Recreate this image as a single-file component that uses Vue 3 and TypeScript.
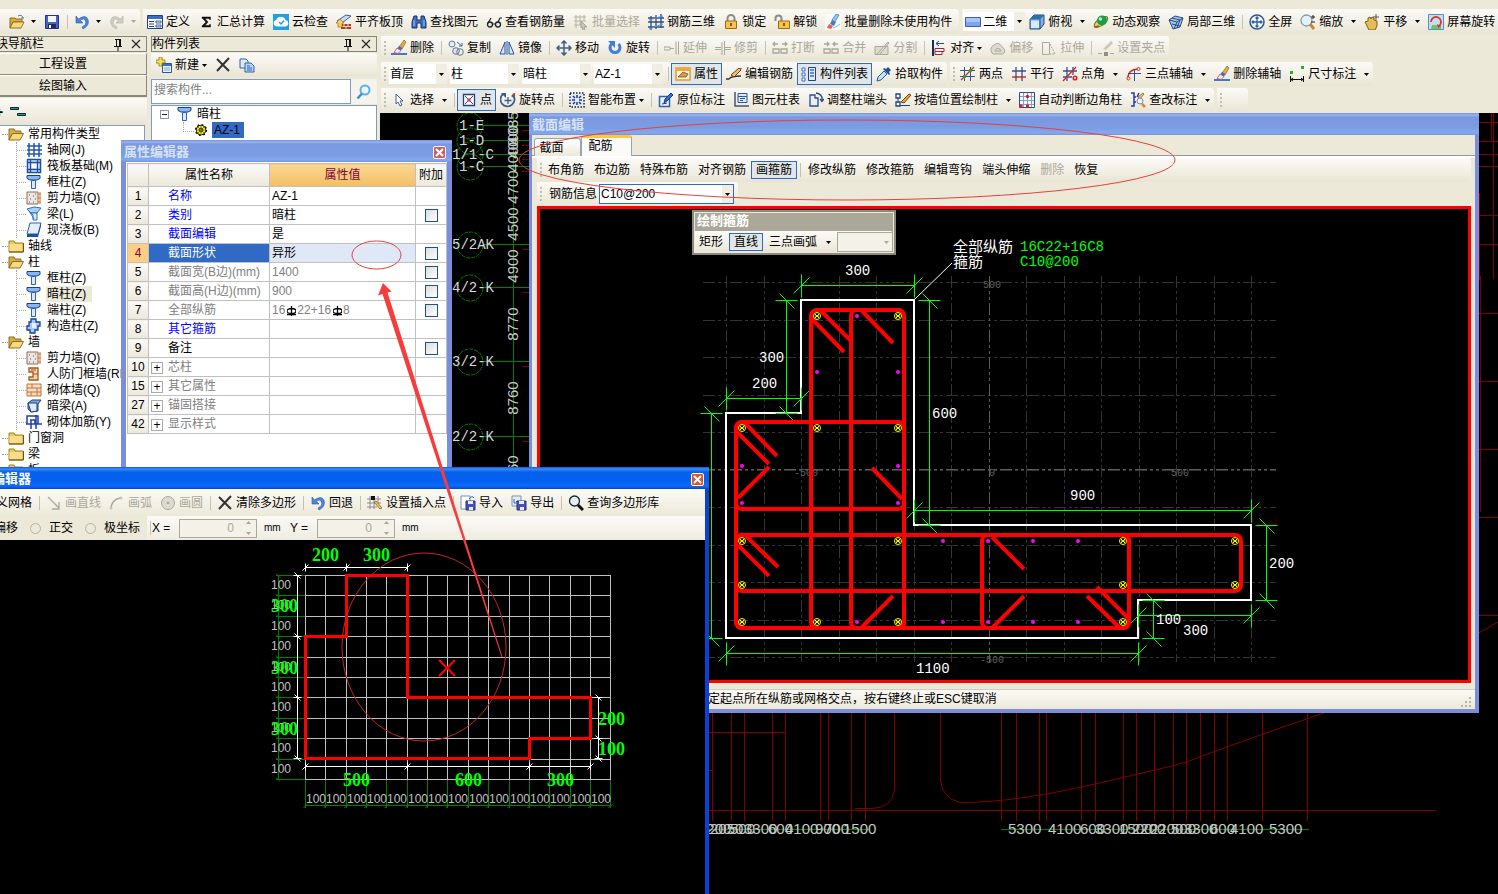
<script setup lang="ts">
import { ref } from 'vue'

interface Tool {
  icon?: string
  label?: string
  name?: string
  off?: boolean
  on?: boolean
  caret?: boolean
  tight?: boolean
  sep?: boolean
}

const icons: Record<string, string> = {
  open: '<path d="M1 4h5l1 1h6v3H4l-3 6z" fill="#e2a93c" stroke="#8d6d24"/><path d="M4 8h11l-3 6H1z" fill="#fbd982" stroke="#8d6d24"/><path d="M9 2q4-2 5 2m-2 0h3" fill="none" stroke="#3d7ea6"/>',
  save: '<path d="M1.500 1.500h13v13h-13z" fill="#4a63c8" stroke="#26357e"/><path d="M4 2h8v6H4z" fill="#f2f5ff"/><path d="M4 10h8v4H4z" fill="#1f2b62"/><path d="M5 11h2v3H5z" fill="#fff"/>',
  undo: '<path d="M2 2v7h7l-2.500-2.500Q10 3.500 11.500 7T8 13l1 2q7-4 5-9.500T4.500 5z" fill="#4a86e0" stroke="#2a55a8" stroke-width=".6"/>',
  redo: '<path d="M14 2v7H7l2.500-2.500Q6 3.500 4.500 7T8 13l-1 2Q0 11 2 5.500T11.500 5z" fill="#d0cfc6" stroke="#b0aea2" stroke-width=".6"/>',
  form: '<path d="M.5 1.500h15v13H.5z" fill="#fff" stroke="#24417f"/><path d="M1 2h14v3H1z" fill="#3b6bc4"/><path d="M2 7.500h5m-5 2.500h5m-5 2.500h5" stroke="#24417f"/><path d="M9 7h5v2H9zm0 4h5v2H9z" fill="#dfe9fa" stroke="#24417f" stroke-width=".8"/>',
  sigma: '<path d="M12.500 5.500V3H4v1l4 4-4 4v1h8.500v-2.500h-1l-.5 1H7L10 8 7 4.500h4l.5 1z" fill="#111" stroke="#111" stroke-width=".5"/>',
  cloud: '<path d="M0 0h16v16H0z" fill="#1f9fe6"/><path d="M4 12.500a3.300 3.300 0 0 1-.8-6.500A5 5 0 0 1 12.500 6a3.300 3.300 0 0 1 0 6.500z" fill="#fff"/><path d="m6 8 2 2 3-3.500" fill="none" stroke="#1f9fe6" stroke-width="1.500"/>',
  slab: '<path d="m1 7 9-6 5 1-9 7z" fill="#c9dcf4" stroke="#3c5d92"/><path d="M5 10h10v5H5z" fill="#b03a24"/><path d="M5 12.500h10M8 10v2.500M12 10v2.500M10 12.500V15" stroke="#f2d4c0"/><path d="m4 5 4 4H6v4H2V9H0z" fill="#fbd44c" stroke="#8d6d24" stroke-width=".7"/>',
  find: '<path d="M3 2h3v4h4V2h3l2 6v6h-5V9H6v5H1V8z" fill="#3a6fc2" stroke="#17356f"/><path d="M3 6v6m10-6v6" stroke="#a9c8f2"/>',
  glasses: '<circle cx="4" cy="10.500" r="2.500" fill="#dfe8f2" stroke="#222" stroke-width="1.300"/><circle cx="12" cy="10.500" r="2.500" fill="#dfe8f2" stroke="#222" stroke-width="1.300"/><path d="M6.500 10h3M2 9l3-5m7 4 2-4h2" fill="none" stroke="#222" stroke-width="1.200"/>',
  batch: '<path d="M1 3h12M1 7h12M1 11h7M3 1v13M7 1v10M11 1v6" stroke="#b5b3a6"/><path d="m8 7 6 6h-3l1 3h-2l-1-3-1 1z" fill="#c9c7bb" stroke="#a5a396"/>',
  cage: '<path d="M0 4h16M0 8h16M0 13h16M3 2v14M8 1v14M13 0v14" stroke="#2c4f86" stroke-width="1.300"/><path d="m1 6 14-4M1 15l14-5" stroke="#6a8dc0"/>',
  lock: '<path d="M4.500 7V4.500a3.500 3.500 0 0 1 7 0V7" fill="none" stroke="#8b8b8b" stroke-width="2"/><path d="M2.500 7h11v7.500h-11z" fill="#f6c250" stroke="#9a6c12"/><path d="M8 9v3" stroke="#5c3f08" stroke-width="1.500"/>',
  unlock: '<path d="M1.500 7V4.500a3 3 0 0 1 6 0V7" fill="none" stroke="#8b8b8b" stroke-width="2"/><path d="M4.500 7h11v7.500h-11z" fill="#f6c250" stroke="#9a6c12"/><path d="M10 9v3" stroke="#5c3f08" stroke-width="1.500"/>',
  brush: '<path d="M0 14h16" stroke="#4a79b8" stroke-width="2"/><path d="m13 0 2 2-4 7-3-2z" fill="#e9a63a" stroke="#8a5d18" stroke-width=".6"/><path d="m8 6 3.500 2-2 3L6 9z" fill="#3c6ec8"/><path d="m6 8 4 2.500-3 3-4-1z" fill="#f4e6ee" stroke="#a0507a" stroke-width=".8"/>',
  erase: '<path d="M0 0h16v16H0z" fill="#fbfbf9"/><path d="m11 0 3 1-4 7-3-2z" fill="#8fc4ee" stroke="#2f6ba8" stroke-width=".6"/><path d="m7 6 4 2-2 4-4-2z" fill="#3f7fd0"/><path d="m4 10 4 2-2 3-4-1z" fill="#e8604c"/><path d="M8 14q4-1 7-4" stroke="#9bb7d8" fill="none"/>',
  rect2d: '<path d="M.5 3.500h15v9H.5z" fill="#7ea6ef" stroke="#3a5fb0"/><path d="M1 4h14v4H1z" fill="#a9c6fa"/>',
  cube: '<path d="M1 5.500 5 1h10v9l-4 5H1z" fill="#7fb2e4" stroke="#22496f"/><path d="M1 5.500h10L15 1H5z" fill="#2b6dae"/><path d="M2 6.500h8V14H2z" fill="#d6e8f8"/><path d="M11 5.500V15" stroke="#22496f"/>',
  orbit: '<ellipse cx="8" cy="8" rx="8" ry="3.500" transform="rotate(-35 8 8)" fill="#d8d26a" stroke="#4c7f2a"/><circle cx="9" cy="6.500" r="5" fill="#1f9b44"/><circle cx="7.500" cy="5" r="1.800" fill="#b9f0c4"/><path d="m1 13 5-1" stroke="#d0452e" stroke-width="1.500"/>',
  box3: '<path d="m1 6 6-4 8 2-3 9-7 2z" fill="#a9c6ee" stroke="#26497f"/><path d="m1 6 8 2 6-4M9 8l-3 7M4 4l8 2-3 8M4 10l8 2" fill="none" stroke="#26497f"/>',
  fit: '<circle cx="8" cy="8" r="7" fill="#f4f8ff" stroke="#37557f" stroke-width="1.500"/><path d="M8 3v10M3 8h10M6.500 4.500 8 3l1.500 1.500M6.500 11.500 8 13l1.500-1.500M4.500 6.500 3 8l1.500 1.500m7-3L13 8l-1.500 1.500" fill="none" stroke="#2b5fb0" stroke-width="1.300"/>',
  zoom: '<circle cx="6.500" cy="6.500" r="5.500" fill="#e5f1fc" stroke="#8599ad" stroke-width="1.300"/><path d="m10 10 4 5" stroke="#c08a3c" stroke-width="3"/><path d="M11 3h4m-2-2v4m-2 3h4" stroke="#222"/>',
  pan: '<path d="M1 8 4 7V4l2-1 1 2 1-2 2 1v2l3 1v5l-2 4H5z" fill="#e8bc58" stroke="#7e5d1c"/><path d="M12 0v6M9 3h6" stroke="#555"/>',
  spin: '<path d="M0 0h16v16H0z" fill="#bfe0f4"/><path d="M4 11h9v4H3z" fill="#7fbd62"/><path d="M3 8a5 5 0 1 1 8 4" fill="none" stroke="#e0332a" stroke-width="1.800"/><path d="m9 10 1 4 3-2z" fill="#e0332a"/><path d="M.5.500h15v15H.5z" fill="none" stroke="#4d93c4"/>',
  copy: '<circle cx="4" cy="4" r="3" fill="#e3edf8" stroke="#5f7fa8"/><circle cx="8" cy="11" r="3.300" fill="#dce4ec" stroke="#66788c"/><circle cx="12" cy="12" r="3.300" fill="none" stroke="#66788c"/><path d="m9 2 5 4m0-3v3h-3" fill="none" stroke="#3e6cae"/>',
  mirror: '<path d="M6 2v12H1zM10 2v12h5z" fill="#d6e6fa" stroke="#2b55a0"/><path d="M8 1v14" stroke="#2b55a0"/>',
  move: '<path d="M8 1v14M1 8h14M5.500 3.500 8 1l2.500 2.500M5.500 12.500 8 15l2.500-2.500M3.500 5.500 1 8l2.500 2.500m9-5L15 8l-2.500 2.500" fill="none" stroke="#3f5f86" stroke-width="1.500"/>',
  rotate: '<path d="M4.500 4a5 5 0 1 0 7 0" fill="none" stroke="#3f7ddd" stroke-width="3"/><path d="M1 1h7v7z" fill="#3f7ddd"/>',
  extend: '<path d="M0 7h6v3H0zM6 8.500h4M12 1.500v13M14.500 1.500v13" fill="none" stroke="#aaa89a"/>',
  trim: '<path d="M0 7.500h6M0 9.500h6m4-2h6m-6 2h6M7 2v13M9.500 1v14" fill="none" stroke="#aaa89a"/>',
  split: '<path d="M1 4h5M3 2 1 4l2 2m12-2h-5m3-2 2 2-2 2M1 9h6v4H1zm8 0h6v4H9z" fill="none" stroke="#aaa89a" stroke-width="1.300"/>',
  merge: '<path d="M1 4h5M4 2l2 2-2 2m11-2h-5m2-2-2 2 2 2M1 9h6v4H1zm8 0h6v4H9z" fill="none" stroke="#aaa89a" stroke-width="1.300"/>',
  cut: '<path d="M1 6.500h13v8H1zM3 14 14 2l1 1L6 14" fill="#dedcd0" stroke="#aaa89a"/>',
  align: '<path d="M2 0v16" stroke="#14305f" stroke-width="2"/><path d="M5 3.500h8M8 1 5 3.500 8 6" fill="none" stroke="#2545c8"/><path d="M4 8.500h9v3H4zm0 3h7v3H4z" fill="#fff" stroke="#b02020"/>',
  offset: '<path d="M2 13q-3-5 2-8 5-4 8 2 5 3 1 7H3z" fill="#dedcd0" stroke="#aaa89a"/><path d="M5 11q1-4 5-2 2 3-1 2z" fill="none" stroke="#aaa89a"/>',
  pull: '<path d="M1.500 2.500h7v12h-7z" fill="none" stroke="#aaa89a"/><path d="m9 4 5 10H9" fill="none" stroke="#aaa89a" stroke-dasharray="2 1"/>',
  grip: '<path d="M0 13.500h4m8 0h4" stroke="#aaa89a"/><path d="M6 12h4v4H6z" fill="#8f8d80"/><path d="m5 9 8-8 2 2-7 7z" fill="#cac8bc"/>',
  props: '<path d="M1 2h14v12H1z" fill="#fff3dc" stroke="#e29a2c" stroke-width="1.500"/><path d="M1 2h14v3H1z" fill="#f0a83c"/><path d="m3 11 5-5 5 2-2 3H6z" fill="#d49a4a" stroke="#7a5420" stroke-width=".8"/>',
  editbar: '<path d="M0 13h3q2-3 12-3" fill="none" stroke="#333" stroke-width="1.300"/><path d="m5 9 8-7 2 2-7 7z" fill="#e9c27c" stroke="#6a3f1c"/><path d="m13 2 2 2 1-2z" fill="#d4452c"/>',
  list: '<path d="M1 2h3v3H1zm0 5h3v3H1zm0 5h3v3H1z" fill="#fff" stroke="#3b6bc4"/><path d="M7.500 1.500h7v13h-7z" fill="#dfe9fa" stroke="#24417f"/><path d="M9 4h4m-4 3h4m-4 3h4" stroke="#3b6bc4" stroke-width="1.500"/>',
  pick: '<path d="m1 15 1-4 6-6 3 3-6 6z" fill="#bfe3fb" stroke="#285a94"/><path d="m7 3 6 6 1-1-1-2 2-2-3-3-2 2-2-1z" fill="#1d4d9c"/>',
  twopt: '<path d="M0 4.500h15M0 10.500h15M4.500 1v14M10.500 1v14" stroke="#3b4f8f"/><path d="M1 14 14 1" stroke="#e02020" stroke-width="1.300"/><circle cx="10.500" cy="4.500" r="1.800" fill="#2f9b34"/><circle cx="4.500" cy="10.500" r="1.800" fill="#2f9b34"/>',
  para: '<path d="M1 5h14M5 1v14M11 1v14" stroke="#3b4f8f" stroke-width="1.300"/><path d="M1 11h14" stroke="#c01818" stroke-width="1.300"/>',
  angle: '<path d="M1 5h14M1 11h9M5 1v14M11 1v8" stroke="#3b4f8f" stroke-width="1.300"/><path d="M1 15 14 1" stroke="#e02020" stroke-width="1.300"/><circle cx="13" cy="12" r="1.800" fill="none" stroke="#e02020" stroke-width="1.500"/>',
  arc3: '<path d="M2 14q-1-11 11-11" fill="none" stroke="#e02020" stroke-width="1.500"/><circle cx="2.500" cy="12.500" r="1.500" fill="#fff" stroke="#e02020"/><circle cx="12.500" cy="3" r="1.500" fill="#fff" stroke="#e02020"/><path d="M2 7.500h13M8.500 4v11" stroke="#3b4f8f"/>',
  dim: '<path d="M1.500 10v6m13-6v6M2 13.500h12M4 12l-2 1.500L4 15m8-3 2 1.500-2 1.500" fill="none" stroke="#111"/><path d="M1 5h3v3H1zM12 0h3v3h-3z" fill="#2fa834"/>',
  cursor: '<path d="M5 2v10l2-2 2 4 2-1-2-4h3z" fill="#fff" stroke="#45619c"/>',
  point: '<path d="M2.500 2.500h11v11h-11z" fill="#fff" stroke="#23407f" stroke-width="1.300"/><path d="m4 4 8 8m0-8-8 8" stroke="#2b4fb0"/><path d="M6.500 6.500h3v3h-3z" fill="#e03030"/>',
  rotpt: '<path d="M3 2a7 7 0 1 0 10 1" fill="none" stroke="#3a5f94" stroke-width="1.800"/><path d="M1 1h5v5zM15 1v6l-4-3z" fill="#3a5f94"/><path d="M8 5v7M4.500 8.500h7" stroke="#3a5f94" stroke-width="1.300"/><path d="m12 2 3-1v4z" fill="#d03030"/>',
  smart: '<path d="M1 1h14v14H1z" fill="#e3ecf8" stroke="#222" stroke-width="1.500" stroke-dasharray="1.500 1.500"/><path d="M8 3v3m0 4v3M3 8h3m4 0h3M4 4l2 2m4 4 2 2m0-8-2 2m-4 4-2 2" stroke="#16389c" stroke-width="1.500"/>',
  mark: '<path d="M1.500 4.500h10v10h-10z" fill="#e9f0fb" stroke="#2c62b4" stroke-width="1.500"/><path d="m6 11 1-4 6-6 2 2-6 6z" fill="#2f6fd0" stroke="#173d80"/><path d="m4 12 5-1" stroke="#173d80"/>',
  table: '<path d="M2 0v14h14" fill="none" stroke="#44557a" stroke-width="1.500"/><path d="M5 1.500h9v9H5z" fill="#dfe9fa" stroke="#2b55a0"/><path d="M5 4.500h9M7 6.500h5m-5 2h3" stroke="#2b55a0"/>',
  adjust: '<path d="M2 14V3h5v3h3v8z" fill="#e9f0fb" stroke="#2c4c8c" stroke-width="1.300"/><path d="M8 1q7 1 6 8m-2-2 2 2.500L16 7" fill="none" stroke="#2c4c8c" stroke-width="1.300"/>',
  wall: '<path d="M1 2h4v4H1zm0 8h4v4H1z" fill="#fff" stroke="#23407f" stroke-width="1.300"/><path d="M3 6v4m2 3.500h10" stroke="#23407f"/><path d="m6 10 8-8 2 1-7 8z" fill="#e9a63a" stroke="#7a3f1c"/>',
  judge: '<path d="M.5.500h15v15H.5z" fill="#f4f8ff" stroke="#2c4c8c"/><path d="M1 4.500h14M1 8.500h14M1 12.500h14M4.500 1v14M8.500 1v14M12.500 1v14" stroke="#7f9fd0"/><circle cx="8.500" cy="4.500" r="1.700" fill="#e02020"/><circle cx="2" cy="14" r="1.700" fill="#e02020"/><circle cx="8.500" cy="14" r="1.700" fill="#e02020"/>',
  check: '<path d="M1 1h3v4h2M1 14h3v-4h2M4 5v5M9 1 7 5" fill="none" stroke="#1f3f9f" stroke-width="1.500"/><path d="m8 5 5-4 1 1-4 5z" fill="#e9c27c" stroke="#7a5420" stroke-width=".7"/><circle cx="10" cy="9" r="3" fill="#e5f1fc" stroke="#7a8ba0"/><path d="m12 12 3 3" stroke="#d88a2c" stroke-width="2.500"/>',
  newc: '<path d="M6.500 6.500h9v9h-9z" fill="#eef4fd" stroke="#2b55a0"/><path d="M7 7h8v2H7z" fill="#3b6bc4"/><path d="M8 11h6m-6 2h6" stroke="#7fa0d8"/><path d="M3 0h3v3h3v3H6v3H3V6H0V3h3z" fill="#fbe04c" stroke="#8a7a18" stroke-width=".8"/>',
  del: '<path d="m2 2 12 12M14 1 2 14" stroke="#333" stroke-width="2"/>',
  dup: '<path d="M1 2h6l2 2v7H1z" fill="#dfe9fa" stroke="#2b62b4"/><path d="M6 6h6l3 3v6H6z" fill="#bcd4f6" stroke="#2b62b4"/><path d="M8 9h3m-3 2h5m-5 2h5" stroke="#2b62b4"/>',
  search: '<circle cx="9" cy="6" r="4.500" fill="#e9f6ff" stroke="#5cb0e4" stroke-width="2"/><path d="m6 9.500-4.500 5" stroke="#3c8fd0" stroke-width="2.500"/>',
  lens: '<circle cx="6.500" cy="6" r="5" fill="#dff1fb" stroke="#222" stroke-width="1.300"/><path d="m10 10 5 5" stroke="#111" stroke-width="3"/>',
  folder: '<path d="M1 3h5l1 2h8v9H1z" fill="#f2c65a" stroke="#a87f22"/><path d="M1.500 6h13v7h-13z" fill="#fbdd85"/><path d="M1 14h14.500V5" fill="none" stroke="#6b5220"/>',
  fopen: '<path d="M1 3h5l1 2h6v3H4l-3 6z" fill="#e2a93c" stroke="#8d6d24"/><path d="M4.500 7.500h11L12 14H1z" fill="#fbd982" stroke="#8d6d24"/>',
  axis: '<path d="M3 1v14M8 1v14M13 1v14M1 4h15M1 8h15M1 12h15" stroke="#235aa8" stroke-width="1.500"/>',
  raft: '<path d="M1.500 1.500h13v13h-13z" fill="#dceafb" stroke="#1c4f9c" stroke-width="1.500"/><path d="M4.500 1v14m7-14v14M1 4.500h14m-14 7h14" stroke="#1c4f9c" stroke-width="1.300"/><path d="M6 6h4v4H6z" fill="#fff"/>',
  col: '<path d="M1 1.500h13v3l-3 1.500H4L1 4.500z" fill="#8db8ee" stroke="#173f8c"/><path d="M5.500 6.500h4v8h-4z" fill="#dceafb" stroke="#2b62b4"/>',
  shear: '<path d="M1 2h11v12H1z" fill="#ece5e0" stroke="#8a6a5a"/><path d="M3 5h1m3 1h1M4 9h1m4 0h1m-3 3h1m-5 0h1m5-8h1" stroke="#555"/><path d="M14 2v12m-2-10h3m-3 4h3m-3 4h3" stroke="#cf7a30"/>',
  beam: '<path d="m1 3 7-2 7 1-4 5H5z" fill="#a9d0f6" stroke="#2b72b4"/><path d="M5 7h6v7H7V9z" fill="#dceafb" stroke="#2b72b4"/><path d="m3 5 5 8" stroke="#2b72b4"/>',
  plate: '<path d="M4 1h11l-3 11H1z" fill="#e4effc" stroke="#2b62b4"/><path d="M1 12h11v3H1zM15 1v3l-3 11v-3z" fill="#1c4f9c"/>',
  tiecol: '<path d="M5 1h5v3h4v4h-2v4H9v3H4v-3H1V8h2V4h2z" fill="#a9c9f4" stroke="#173f8c" stroke-width="1.300"/><path d="M6 5h4v5H6z" fill="#e4effc"/>',
  door: '<path d="M3 2h9v12H3v-3h4V6H3z" fill="#f3d5b0" stroke="#a3591c" stroke-width="1.300"/><path d="M7 8h5M5 4h5" stroke="#a3591c"/>',
  brick: '<path d="M1 2h14v12H1z" fill="#f8dcc4" stroke="#c0743a"/><path d="M1 6h14M1 10h14M6 2v4m5 0v4M5 10v4m6-4v4" stroke="#c0743a"/>',
  dbeam: '<path d="m2 5 4-3h9l-3 4v7l-7 1-3-3z" fill="#7fa6d8" stroke="#1c3f7c"/><path d="M2 5h9v8L5 14z" fill="#dceafb" stroke="#1c3f7c"/>',
  rebar: '<path d="M1 2h11v8H1zM0 10h16M5 6v9m5-14v14M4 6h5v4" fill="none" stroke="#1c3fac" stroke-width="1.500"/>',
  gear: '<circle cx="8" cy="8" r="6" fill="#111" stroke="#111" stroke-width="2" stroke-dasharray="2 2.700"/><circle cx="8" cy="8" r="5" fill="#f7f01c"/><path d="M8 4v8M4 8h8M5 5l6 6m0-6-6 6" stroke="#111" stroke-width=".8"/><circle cx="8" cy="8" r="1.500" fill="#f7f01c" stroke="#111"/>',
  gline: '<path d="m2 2 11 11m0-6v7H6" fill="none" stroke="#aaa89a" stroke-width="1.300"/>',
  garc: '<path d="M2 14q0-9 9-11" fill="none" stroke="#aaa89a" stroke-width="1.300"/><circle cx="2" cy="13" r="1.500" fill="#c8c6ba"/><circle cx="12" cy="3" r="1.500" fill="#c8c6ba"/>',
  gcirc: '<circle cx="8" cy="8" r="6.500" fill="#dedcd0" stroke="#aaa89a"/><circle cx="8" cy="8" r="1.300" fill="#aaa89a"/>',
  insert: '<path d="M0 4h14M0 8h14M0 12h10M3 1v13M7 1v13M11 1v8" stroke="#8c8c8c"/><path d="M4 1h4v4H4z" fill="#111"/><path d="m7 7 6 7 2-1-6-7z" fill="#f3c950" stroke="#7a5420" stroke-width=".7"/>',
  imp: '<path d="M1 1h9v13H1z" fill="#fff" stroke="#7d8fb0"/><path d="M6 6h9v9H6z" fill="#4a50b8" stroke="#26357e"/><path d="M8 6h5v3H8zm1 6h4v3H9z" fill="#e9ecff"/><path d="M9 4q3-4 5-1" fill="none" stroke="#2b62b4"/>',
  exp: '<path d="M1 1h9v10H1z" fill="#e6eefb" stroke="#7d8fb0"/><path d="M6 6h9v9H6z" fill="#4a50b8" stroke="#26357e"/><path d="M8 6h5v3H8zm1 6h4v3H9z" fill="#e9ecff"/><path d="M3 4v4h4M5 6l2 2" fill="none" stroke="#2b62b4"/>',
  collapse: '<path d="M.5 3.500h8v2h-8zM7.500 9.500h8v2h-8z" fill="#18a0a0" stroke="#0a2a2a"/>',
  pin: '<path d="M5 3.500h6M6.500 4v6m4-6v6M9.500 4v6M4 10.500h8M8 11v4" stroke="#111"/>',
  cross: '<path d="m4 4 8 8m0-8-8 8" stroke="#222" stroke-width="1.100"/>',
}

const S: Tool = { sep: true }
const fileTools: Tool[] = [
  { icon: 'open', name: '打开', caret: true },
  { icon: 'save', name: '保存' },
  S,
  { icon: 'undo', name: '撤销', caret: true },
  { icon: 'redo', name: '重做', caret: true, off: true },
]
const mainTools: Tool[] = [
  { icon: 'form', label: '定义' },
  { icon: 'sigma', label: '汇总计算' },
  { icon: 'cloud', label: '云检查' },
  { icon: 'slab', label: '平齐板顶' },
  { icon: 'find', label: '查找图元' },
  { icon: 'glasses', label: '查看钢筋量' },
  { icon: 'batch', label: '批量选择', off: true },
  { icon: 'cage', label: '钢筋三维' },
  { icon: 'lock', label: '锁定' },
  { icon: 'unlock', label: '解锁' },
  { icon: 'erase', label: '批量删除未使用构件' },
]
const viewTools: Tool[] = [
  { icon: 'cube', label: '俯视', caret: true },
  { icon: 'orbit', label: '动态观察' },
  { icon: 'box3', label: '局部三维' },
  S,
  { icon: 'fit', label: '全屏' },
  { icon: 'zoom', label: '缩放', caret: true },
  { icon: 'pan', label: '平移', caret: true },
  { icon: 'spin', label: '屏幕旋转', caret: true, tight: true },
]
const editTools: Tool[] = [
  { icon: 'brush', label: '删除' },
  S,
  { icon: 'copy', label: '复制' },
  { icon: 'mirror', label: '镜像' },
  S,
  { icon: 'move', label: '移动' },
  { icon: 'rotate', label: '旋转' },
  S,
  { icon: 'extend', label: '延伸', off: true },
  { icon: 'trim', label: '修剪', off: true },
  S,
  { icon: 'split', label: '打断', off: true },
  { icon: 'merge', label: '合并', off: true },
  { icon: 'cut', label: '分割', off: true },
  S,
  { icon: 'align', label: '对齐', caret: true, tight: true },
  { icon: 'offset', label: '偏移', off: true },
  { icon: 'pull', label: '拉伸', off: true },
  S,
  { icon: 'grip', label: '设置夹点', off: true },
]
const partTools: Tool[] = [
  { icon: 'props', label: '属性', on: true },
  { icon: 'editbar', label: '编辑钢筋' },
  { icon: 'list', label: '构件列表', on: true },
  { icon: 'pick', label: '拾取构件' },
]
const axisTools: Tool[] = [
  { icon: 'twopt', label: '两点' },
  { icon: 'para', label: '平行' },
  { icon: 'angle', label: '点角', caret: true },
  { icon: 'arc3', label: '三点辅轴', caret: true },
  { icon: 'brush', label: '删除辅轴' },
  { icon: 'dim', label: '尺寸标注', caret: true },
]
const drawTools: Tool[] = [
  { icon: 'cursor', label: '选择', caret: true },
  S,
  { icon: 'point', label: '点', on: true },
  { icon: 'rotpt', label: '旋转点' },
  S,
  { icon: 'smart', label: '智能布置', caret: true, tight: true },
  S,
  { icon: 'mark', label: '原位标注' },
  { icon: 'table', label: '图元柱表' },
  { icon: 'adjust', label: '调整柱端头' },
  { icon: 'wall', label: '按墙位置绘制柱', caret: true },
  { icon: 'judge', label: '自动判断边角柱' },
  { icon: 'check', label: '查改标注', caret: true },
]
const polyTools: Tool[] = [
  { label: '义网格' },
  S,
  { icon: 'gline', label: '画直线', off: true },
  { icon: 'garc', label: '画弧', off: true },
  { icon: 'gcirc', label: '画圆', off: true },
  S,
  { icon: 'del', label: '清除多边形' },
  S,
  { icon: 'undo', label: '回退' },
  S,
  { icon: 'insert', label: '设置插入点' },
  S,
  { icon: 'imp', label: '导入' },
  { icon: 'exp', label: '导出' },
  S,
  { icon: 'lens', label: '查询多边形库' },
]
const barTools: Tool[] = [
  { label: '布角筋' },
  { label: '布边筋' },
  { label: '特殊布筋' },
  { label: '对齐钢筋' },
  { label: '画箍筋', on: true },
  S,
  { label: '修改纵筋' },
  { label: '修改箍筋' },
  { label: '编辑弯钩' },
  { label: '端头伸缩' },
  { label: '删除', off: true },
  { label: '恢复' },
]

const rows: { cls: string; groups: { tools: Tool[]; combos?: string[] }[] }[] = [
  { cls: 'edit', groups: [{ tools: editTools }] },
  { cls: 'part', groups: [{ combos: ['首层', '柱', '暗柱', 'AZ-1'], tools: [S, ...partTools] }, { tools: axisTools }] },
  { cls: 'draw', groups: [{ tools: drawTools }, { tools: [] }] },
]

interface Folder {
  name: string
  open?: boolean
  kids: { icon: string; name: string; sel?: boolean }[]
}
const tree: Folder[] = [
  {
    name: '常用构件类型',
    open: true,
    kids: [
      { icon: 'axis', name: '轴网(J)' },
      { icon: 'raft', name: '筏板基础(M)' },
      { icon: 'col', name: '框柱(Z)' },
      { icon: 'shear', name: '剪力墙(Q)' },
      { icon: 'beam', name: '梁(L)' },
      { icon: 'plate', name: '现浇板(B)' },
    ],
  },
  { name: '轴线', kids: [] },
  {
    name: '柱',
    open: true,
    kids: [
      { icon: 'col', name: '框柱(Z)' },
      { icon: 'col', name: '暗柱(Z)', sel: true },
      { icon: 'col', name: '端柱(Z)' },
      { icon: 'tiecol', name: '构造柱(Z)' },
    ],
  },
  {
    name: '墙',
    open: true,
    kids: [
      { icon: 'shear', name: '剪力墙(Q)' },
      { icon: 'door', name: '人防门框墙(RF)' },
      { icon: 'brick', name: '砌体墙(Q)' },
      { icon: 'dbeam', name: '暗梁(A)' },
      { icon: 'rebar', name: '砌体加筋(Y)' },
    ],
  },
  { name: '门窗洞', kids: [] },
  { name: '梁', kids: [] },
  { name: '板', kids: [] },
]

interface Prop {
  n: number
  name: string
  tone: 'blue' | 'gray' | 'black' | 'fold'
  value?: string
  box?: boolean
  sel?: boolean
}
const props: Prop[] = [
  { n: 1, name: '名称', tone: 'blue', value: 'AZ-1' },
  { n: 2, name: '类别', tone: 'blue', value: '暗柱', box: true },
  { n: 3, name: '截面编辑', tone: 'blue', value: '是' },
  { n: 4, name: '截面形状', tone: 'blue', value: '异形', box: true, sel: true },
  { n: 5, name: '截面宽(B边)(mm)', tone: 'gray', value: '1400', box: true },
  { n: 6, name: '截面高(H边)(mm)', tone: 'gray', value: '900', box: true },
  { n: 7, name: '全部纵筋', tone: 'gray', value: '16#22+16#8', box: true },
  { n: 8, name: '其它箍筋', tone: 'blue' },
  { n: 9, name: '备注', tone: 'black', box: true },
  { n: 10, name: '芯柱', tone: 'fold' },
  { n: 15, name: '其它属性', tone: 'fold' },
  { n: 27, name: '锚固搭接', tone: 'fold' },
  { n: 42, name: '显示样式', tone: 'fold' },
]

/* dimension lines: from, to, position across */
const hdim = (a: number, b: number, y: number) =>
  `M${a} ${y}H${b}` + [a, b].map((x) => `M${x} ${y - 11}v23M${x - 8} ${y + 8}l16 -16`).join('')
const vdim = (a: number, b: number, x: number) =>
  `M${x} ${a}V${b}` + [a, b].map((y) => `M${x - 11} ${y}h22M${x - 7} ${y - 7}l15 15`).join('')
const sectionDims = [
  hdim(801.5, 914.5, 285.5), vdim(300.5, 413.5, 786.5), hdim(726.5, 801.5, 398.5),
  vdim(413.5, 638.5, 711.5), vdim(300.5, 525.5, 929.5), hdim(914.5, 1251.5, 510.5),
  vdim(525.5, 600.5, 1266.5), hdim(1138.5, 1251.5, 615.5), vdim(600.5, 638.5, 1153.5),
  hdim(726.5, 1138.5, 653.5),
].join('')
const sectionLabels: [number, number, string][] = [
  [845, 271, '300'], [759, 358, '300'], [752, 384, '200'], [932, 414, '600'], [1070, 496, '900'],
  [1269, 564, '200'], [1156, 620, '100'], [1183, 631, '300'], [916, 669, '1100'],
]
const gridLabels: [number, number, string][] = [
  [983, 285, '500'], [794, 473, '-500'], [989, 473, '0'], [1171, 473, '500'], [980, 660, '-500'],
]
const gx = Array.from({ length: 15 }, (_, i) => Math.round(726 + i * 37.5) + 0.5)
const gy = Array.from({ length: 11 }, (_, i) => Math.round(282 + i * 37.5) + 0.5)
/* stirrup boxes: x, y, right, bottom */
const stirrups = [
  [811, 310, 904, 628], [851, 310, 904, 628], [736, 422, 904, 509], [736, 422, 904, 628],
  [736, 535, 1241, 591], [736, 535, 1129, 628], [982, 535, 1129, 628],
]
const hooks =
  'M812 319l32 33M821 311l31 31M862 311l31 32M737 432l32 32M745 423l32 33M769 467l-31 31M872 468l30 31' +
  'M738 545l31 31M746 536l32 31M992 537l32 32M862 627l31 -31M993 627l31 -31M1097 587l32 32M1087 596l32 31'
const corners = [
  [817, 316], [898, 316], [742, 428], [817, 428], [898, 428], [742, 541], [898, 541], [742, 585],
  [742, 622], [817, 622], [898, 622], [1123, 541], [1123, 585], [1123, 622], [1235, 541], [1235, 585],
]
const mids = [
  [857, 316], [817, 372], [898, 372], [742, 466], [898, 466], [742, 503], [898, 503], [943, 541],
  [988, 541], [1033, 541], [1078, 541], [857, 622], [943, 622], [988, 622], [1033, 622], [1078, 622],
]

/* polygon editor grid */
const px = Array.from({ length: 16 }, (_, i) => Math.round(305 + i * 20.35) + 0.5)
const py = Array.from({ length: 11 }, (_, i) => Math.round(575 + i * 20.4) + 0.5)
const polyGrid = px.map((x) => `M${x} 575V780`).join('') + py.map((y) => `M305 ${y}H611`).join('')
const polyRule =
  px.map((x) => `M${x} 780V808m-2 0l4 -4`).join('') + py.map((y) => `M305 ${y}H276m0 -2l4 4`).join('') +
  'M278.5 575V780M305 805.5H611'
const tickH = (xs: number[], y: number) =>
  `M${xs[0]} ${y}H${xs[xs.length - 1]}` + xs.map((x) => `M${x} ${y - 4}v8M${x - 3} ${y + 3}l6 -6`).join('')
const tickV = (ys: number[], x: number) =>
  `M${x} ${ys[0]}V${ys[ys.length - 1]}` + ys.map((y) => `M${x - 4} ${y}h8M${x - 3} ${y - 3}l6 6`).join('')
const polyDims = [
  tickH([305.5, 346.5, 407.5], 567.5), tickH([305.5, 407.5, 529.5, 590.5], 766.5),
  tickV([575.5, 636.5, 697.5, 758.5], 297.5), tickV([697.5, 738.5, 758.5], 598.5),
].join('')
const polyLabels: [number, number, string][] = [
  [312, 555, '200'], [363, 555, '300'], [271, 606, '300'], [271, 668, '300'], [271, 729, '300'],
  [343, 780, '500'], [455, 780, '600'], [547, 780, '300'], [598, 719, '200'], [598, 749, '100'],
]

/* plan drawing behind the windows */
const planX = [712, 731, 744, 772, 785, 820, 828, 851, 865, 1001, 1016, 1039, 1046, 1081, 1095, 1123, 1136, 1154, 1173, 1186, 1200, 1214, 1227, 1262, 1307]
const planLines =
  planX.map((x) => `M${x + 0.5} 700V821`).join('') +
  'M700 810.5H1436M700 732.500H785M700 770.500H713' +
  'M894.500 700V790Q892 808 872 808.500H855M940.500 700V780Q942 798 960 802.500Q1012 803 1095 784T1186 762Q1250 738 1324 713' +
  [122, 141, 154, 166, 215, 244, 313, 381, 449, 517, 615].map((y) => `M1470 ${y + 0.5}H1900`).join('') +
  'M1491.500 100V140M1493.500 100V279M1479.500 193V280M1480.500 276V512M1470 638L1498 622'
const bubbles: [number, string, number][] = [
  [126, '1-E', 459], [141, '1-D', 459], [155, '1/1-C', 452], [167, '1-C', 459], [245, '5/2AK', 452],
  [288, '4/2-K', 452], [362, '3/2-K', 452], [437, '2/2-K', 452],
]
const spans: [number, string][] = [
  [128, '4085'], [142, '4000'], [155, '4000'], [187, '4700'], [224, '4500'], [266, '4900'], [324, '8770'], [398, '8760'], [472, '8760'],
]
const footMarks: [number, string][] = [
  [698, '2200'], [710, '2050'], [730, '500'], [744, '3300'], [768, '600'], [785, '4100'], [815, '900'], [824, '700'],
  [843, '1500'], [1008, '5300'], [1048, '4100'], [1080, '600'], [1095, '3300'], [1119, '1500'], [1132, '2200'],
  [1150, '2200'], [1171, '500'], [1184, '3300'], [1210, '600'], [1230, '4100'], [1269, '5300'],
]

const keyword = ref('')
const spin = ref({ X: 0, Y: 0 })
</script>

<template>
  <div class="app">
    <header class="topbar">
      <div class="group first">
        <template v-for="(t, i) in fileTools" :key="i">
          <i v-if="t.sep" class="sep" />
          <button v-else class="tool bare" :disabled="t.off" :aria-label="t.name">
            <svg class="ic" viewBox="0 0 16 16" v-html="icons[t.icon!]" />
            <svg v-if="t.caret" class="caret" viewBox="0 0 5 3"><path d="M0 0h5L2.500 3z" /></svg>
          </button>
        </template>
      </div>
      <div class="group">
        <button v-for="t in mainTools" :key="t.label" class="tool" :disabled="t.off">
          <svg class="ic" viewBox="0 0 16 16" v-html="icons[t.icon!]" />{{ t.label }}
        </button>
      </div>
      <div class="group last">
        <label class="view">
          <svg class="ic" viewBox="0 0 16 16" v-html="icons.rect2d" />
          <select aria-label="视图"><option>二维</option></select>
          <span class="drop"><svg class="caret" viewBox="0 0 5 3"><path d="M0 0h5L2.500 3z" /></svg></span>
        </label>
        <template v-for="(t, i) in viewTools" :key="i">
          <i v-if="t.sep" class="sep" />
          <button v-else class="tool" :class="{ tight: t.tight }">
            <svg class="ic" viewBox="0 0 16 16" v-html="icons[t.icon!]" />{{ t.label }}
            <svg v-if="t.caret" class="caret" viewBox="0 0 5 3"><path d="M0 0h5L2.500 3z" /></svg>
          </button>
        </template>
      </div>
    </header>

    <div class="body">
      <aside class="nav">
        <div class="inner">
          <div class="phead">
            <span>模块导航栏</span>
            <button aria-label="固定"><svg class="ic" viewBox="0 0 16 16" v-html="icons.pin" /></button>
            <button aria-label="关闭"><svg class="ic" viewBox="0 0 16 16" v-html="icons.cross" /></button>
          </div>
          <button class="section">工程设置</button>
          <button class="section">绘图输入</button>
          <div class="minibar">
            <b>+</b>
            <button aria-label="折叠"><svg class="ic" viewBox="0 0 16 16" v-html="icons.collapse" /></button>
          </div>
          <ul class="tree">
            <li v-for="f in tree" :key="f.name">
              <div class="row folder">
                <svg class="ic" viewBox="0 0 16 16" v-html="icons[f.open ? 'fopen' : 'folder']" />{{ f.name }}
              </div>
              <ul v-if="f.kids.length">
                <li v-for="k in f.kids" :key="k.name" class="row">
                  <svg class="ic" viewBox="0 0 16 16" v-html="icons[k.icon]" /><span :class="{ sel: k.sel }">{{ k.name }}</span>
                </li>
              </ul>
            </li>
          </ul>
        </div>
      </aside>

      <aside class="parts">
        <div class="phead">
          <span>构件列表</span>
          <button aria-label="固定"><svg class="ic" viewBox="0 0 16 16" v-html="icons.pin" /></button>
          <button aria-label="关闭"><svg class="ic" viewBox="0 0 16 16" v-html="icons.cross" /></button>
        </div>
        <div class="group pbar">
          <button class="tool tight">
            <svg class="ic" viewBox="0 0 16 16" v-html="icons.newc" />新建
            <svg class="caret" viewBox="0 0 5 3"><path d="M0 0h5L2.500 3z" /></svg>
          </button>
          <button class="tool bare" aria-label="删除"><svg class="ic" viewBox="0 0 16 16" v-html="icons.del" /></button>
          <button class="tool bare" aria-label="复制"><svg class="ic" viewBox="0 0 16 16" v-html="icons.dup" /></button>
        </div>
        <div class="find">
          <input v-model="keyword" type="text" placeholder="搜索构件..." aria-label="搜索构件" />
          <button aria-label="搜索"><svg class="ic" viewBox="0 0 16 16" v-html="icons.search" /></button>
        </div>
        <div class="ptree">
          <div class="prow"><i class="minus" /><svg class="ic" viewBox="0 0 16 16" v-html="icons.col" />暗柱</div>
          <div class="prow kid"><svg class="ic" viewBox="0 0 16 16" v-html="icons.gear" /><span>AZ-1</span></div>
        </div>
      </aside>

      <main class="work">
        <div v-for="r in rows" :key="r.cls" class="trow">
          <div v-for="(g, gi) in r.groups" :key="gi" class="group" :class="{ blank: !g.tools.length }">
            <i class="handle" />
            <span v-for="(c, ci) in g.combos" :key="c" class="combo" :class="{ short: ci === 0 }">
              <select :aria-label="c"><option>{{ c }}</option></select>
              <span class="drop"><svg class="caret" viewBox="0 0 5 3"><path d="M0 0h5L2.500 3z" /></svg></span>
            </span>
            <template v-for="(t, i) in g.tools" :key="i">
              <i v-if="t.sep" class="sep" />
              <button v-else class="tool" :class="{ on: t.on, tight: t.tight }" :disabled="t.off">
                <svg class="ic" viewBox="0 0 16 16" v-html="icons[t.icon!]" />{{ t.label }}
                <svg v-if="t.caret" class="caret" viewBox="0 0 5 3"><path d="M0 0h5L2.500 3z" /></svg>
              </button>
            </template>
          </div>
        </div>
        <div class="plan">
          <svg class="cad">
            <g transform="translate(-380 -113)">
              <path :d="planLines" fill="none" stroke="#800000" />
              <path d="M1001 829.500H1309M700 829.500H870" stroke="#008000" />
              <g fill="none" stroke="#008000">
                <path d="M513.500 100V480" />
                <g v-for="b in bubbles" :key="b[0]">
                  <circle cx="470" :cy="b[0]" r="13" stroke-dasharray="4 1" />
                  <path :d="`M483 ${b[0] - 0.5}H529`" />
                  <path :d="`M522 ${b[0] + 4.5}h8`" stroke="#800000" />
                </g>
              </g>
              <text v-for="b in bubbles" :key="b[1]" class="mark" :x="b[2]" :y="b[0]">{{ b[1] }}</text>
              <text v-for="s in spans" :key="s[0]" class="span" text-anchor="middle" :transform="`translate(512 ${s[0]}) rotate(-90)`">{{ s[1] }}</text>
              <text v-for="f in footMarks" :key="f[0]" class="span" :x="f[0]" y="828">{{ f[1] }}</text>
            </g>
          </svg>
        </div>
      </main>
    </div>

    <section class="win dim propwin">
      <div class="title">属性编辑器<button class="close" aria-label="关闭"><svg viewBox="0 0 9 9"><path d="m1 1 7 7m0-7L1 8" /></svg></button></div>
      <div class="pane">
        <table>
          <colgroup><col class="c1" /><col class="c2" /><col class="c3" /><col class="c4" /></colgroup>
          <thead>
            <tr><th></th><th>属性名称</th><th class="hot">属性值</th><th>附加</th></tr>
          </thead>
          <tbody>
            <tr v-for="p in props" :key="p.n" :class="{ cur: p.sel }">
              <th scope="row">{{ p.n }}</th>
              <td class="pname" :class="p.tone"><button v-if="p.tone === 'fold'" class="plus" :aria-label="p.name">+</button>{{ p.name }}</td>
              <td class="pval" :class="p.tone">
                <template v-for="(part, i) in (p.value ?? '').split('#')" :key="i">
                  <svg v-if="i" class="bar" viewBox="0 0 9 10"><path d="M4.500 0v10M0 8.500h9M0 5a4.500 2.500 0 0 1 9 0 4.500 2.500 0 0 1-9 0" /></svg>{{ part }}
                </template>
              </td>
              <td class="pbox"><input v-if="p.box" type="checkbox" :aria-label="p.name + ' 附加'" /></td>
            </tr>
          </tbody>
        </table>
      </div>
    </section>

    <section class="win dim secwin">
      <div class="title">截面编辑</div>
      <div class="pane">
        <div class="tabs" role="tablist">
          <button role="tab">截面</button>
          <button role="tab" class="act" aria-selected="true">配筋</button>
        </div>
        <div class="sheet">
          <div class="group wide">
            <i class="handle" />
            <template v-for="(t, i) in barTools" :key="i">
              <i v-if="t.sep" class="sep" />
              <button v-else class="tool plain" :class="{ on: t.on }" :disabled="t.off">{{ t.label }}</button>
            </template>
          </div>
          <div class="group info">
            <i class="handle" />
            <label for="barinfo">钢筋信息</label>
            <span class="combo framed">
              <select id="barinfo"><option>C10@200</option></select>
              <span class="drop"><svg class="caret" viewBox="0 0 5 3"><path d="M0 0h5L2.500 3z" /></svg></span>
            </span>
          </div>
          <div class="draw">
            <svg class="cad">
              <g transform="translate(-540 -209)">
                <g stroke="#333" stroke-dasharray="12 3 3 3 3 3">
                  <path v-for="x in gx" :key="x" :d="`M${x} 276V662`" />
                  <path v-for="y in gy" :key="y" :d="`M703 ${y}H1276`" />
                  <path d="M989.500 276V662M703 469.500H1276" stroke="#5c5c5c" />
                </g>
                <text v-for="l in gridLabels" :key="l.join()" class="faint" :x="l[0]" :y="l[1]">{{ l[2] }}</text>
                <path d="M801 300H914V525H1251V600H1138V638H726V413H801z" fill="none" stroke="#fff" stroke-width="2" />
                <path :d="sectionDims" fill="none" stroke="#0f0" />
                <g fill="none" stroke="#f00" stroke-width="4">
                  <rect v-for="s in stirrups" :key="s.join()" :x="s[0]" :y="s[1]" :width="s[2] - s[0]" :height="s[3] - s[1]" rx="6" />
                  <path :d="hooks" />
                </g>
                <g v-for="c in corners" :key="c.join()" fill="none" stroke="#ff0">
                  <circle :cx="c[0]" :cy="c[1]" r="3.500" />
                  <path :d="`M${c[0] - 2} ${c[1] - 2}l4 4m0-4l-4 4M${c[0] - 2} ${c[1]}h4`" />
                </g>
                <circle v-for="m in mids" :key="m.join()" :cx="m[0]" :cy="m[1]" r="2" fill="#f0f" />
                <path d="M915 299L952 263" stroke="#fff" />
                <text v-for="l in sectionLabels" :key="l.join()" class="num" :x="l[0]" :y="l[1]">{{ l[2] }}</text>
                <text class="note" x="953" y="245">全部纵筋</text>
                <text class="note" x="953" y="260">箍筋</text>
                <text class="spec" x="1020" y="247">16C22+16C8</text>
                <text class="spec" x="1020" y="262">C10@200</text>
              </g>
            </svg>
            <div class="float">
              <div class="ftitle">绘制箍筋</div>
              <div class="group fbar">
                <button class="tool plain">矩形</button>
                <button class="tool plain on">直线</button>
                <button class="tool plain">三点画弧<svg class="caret" viewBox="0 0 5 3"><path d="M0 0h5L2.500 3z" /></svg></button>
                <span class="combo dead">
                  <select disabled aria-label="半径"><option></option></select>
                  <span class="drop"><svg class="caret" viewBox="0 0 5 3"><path d="M0 0h5L2.500 3z" /></svg></span>
                </span>
              </div>
            </div>
          </div>
        </div>
        <footer class="status">
          <span>定起点所在纵筋或网格交点，按右键终止或ESC键取消</span>
          <svg viewBox="0 0 10 10"><path d="M8 0h2v2H8zM4 4h2v2H4zm4 0h2v2H8zM0 8h2v2H0zm4 0h2v2H4zm4 0h2v2H8z" fill="#b8b4a2" /></svg>
        </footer>
      </div>
    </section>

    <section class="win polywin">
      <div class="title"><span>编辑器</span><button class="close" aria-label="关闭"><svg viewBox="0 0 9 9"><path d="m1 1 7 7m0-7L1 8" /></svg></button></div>
      <div class="pane">
        <div class="group polybar">
          <template v-for="(t, i) in polyTools" :key="i">
            <i v-if="t.sep" class="sep" />
            <button v-else class="tool" :disabled="t.off">
              <svg v-if="t.icon" class="ic" viewBox="0 0 16 16" v-html="icons[t.icon]" />{{ t.label }}
            </button>
          </template>
        </div>
        <div class="group coord">
          <div class="modes">
            <span class="m0">偏移</span>
            <label><input type="radio" name="mode" disabled />正交</label>
            <label><input type="radio" name="mode" disabled />极坐标</label>
          </div>
          <i class="sep" />
          <template v-for="a in (['X', 'Y'] as const)" :key="a">
            <label class="axis" :for="'spin' + a">{{ a }} =</label>
            <span class="spin">
              <input :id="'spin' + a" v-model="spin[a]" type="text" disabled />
              <svg viewBox="0 0 5 14"><path d="M0 3h5L2.500 0zM0 11h5l-2.500 3z" fill="#aca899" /></svg>
            </span>
            <span class="unit">mm</span>
          </template>
        </div>
        <div class="polydraw">
          <svg class="cad">
            <g transform="translate(0 -540)">
              <path :d="polyRule" fill="none" stroke="#008000" />
              <path :d="polyGrid" stroke="#c0c0c0" />
              <text v-for="(y, i) in py.slice(0, 10)" :key="y" class="small" x="271" :y="585 + Math.round(i * 20.4)">100</text>
              <text v-for="x in px.slice(0, 15)" :key="x" class="small" :x="x + 0.5" y="799">100</text>
              <path :d="polyDims" fill="none" stroke="#fff" />
              <path d="M346.500 575.500H407.500V697.500H590.500V738.500H529.500V758.500H305.500V636.500H346.500z" fill="none" stroke="#f00" stroke-width="3" />
              <path d="M439 660l16 16m0-16l-16 16" stroke="#f00" stroke-width="2" />
              <text v-for="l in polyLabels" :key="l.join()" class="big" :x="l[0]" :y="l[1]">{{ l[2] }}</text>
            </g>
          </svg>
        </div>
      </div>
    </section>

    <svg class="ink">
      <g fill="none" stroke="#e8403c">
        <ellipse cx="847" cy="160" rx="328" ry="40" />
        <ellipse cx="376.500" cy="255" rx="24.500" ry="14" />
        <ellipse cx="424" cy="647" rx="82" ry="94" stroke="#c0282a" />
      </g>
      <path d="M383 283L378 295.500L382.500 294L501.500 657H502.500L387.500 292.500L391.500 291.500z" fill="#f83c3c" />
    </svg>
  </div>
</template>

<style>
html,
body {
  margin: 0;
  height: 100%;
  background: #000;
}
#app {
  height: 100%;
}
</style>

<style scoped>
.app {
  position: relative;
  display: flex;
  flex-direction: column;
  min-height: 100vh;
  overflow: hidden;
  background: #ece9d8;
  color: #000;
  font: 12px/16px 'Liberation Sans', 'Noto Sans CJK SC', sans-serif;
}
.app * {
  box-sizing: border-box;
}
button,
select,
input {
  margin: 0;
  padding: 0;
  font: inherit;
  color: inherit;
  border: 0;
  border-radius: 0;
  background: none;
  white-space: nowrap;
}
ul {
  margin: 0;
  padding: 0;
  list-style: none;
}
.ic {
  flex: none;
  width: 16px;
  height: 16px;
}
.topbar {
  display: flex;
  flex: none;
  margin-top: 9px;
  height: 26px;
  white-space: nowrap;
}
.group {
  display: flex;
  flex: none;
  align-items: center;
  height: 24px;
  border-radius: 0 3px 3px 0;
  background: linear-gradient(#fbfaf7, #f3f0e6 50%, #e9e5d4);
}
.topbar .group {
  margin-right: 3px;
  padding-right: 3px;
  height: 25px;
}
.topbar .first {
  padding: 0 0 0 5px;
}
.topbar .last {
  flex: 1 0 auto;
  margin-right: 0;
}
.tool {
  display: flex;
  flex: none;
  align-items: center;
  height: 22px;
  padding: 0 3px;
  border: 1px solid transparent;
  gap: 3px;
}
.tool:disabled {
  color: #aca899;
}
.tool.on {
  border-color: #316ac5;
  background: #e1e6e8;
}
.tool.plain {
  height: 18px;
  padding: 0 4px;
}
.caret {
  flex: none;
  width: 5px;
  height: 3px;
  margin-left: 5px;
  fill: currentColor;
}
.bare .caret {
  margin-left: 3px;
}
.tight .caret {
  margin-left: 0;
}
.sep {
  flex: none;
  width: 1px;
  height: 14px;
  margin: 0 2px 0 3px;
  background: #c5c2b2;
}
.handle {
  flex: none;
  width: 2px;
  height: 14px;
  margin: 0 1px 0 3px;
  background: repeating-linear-gradient(#c1beb0 0 2px, transparent 2px 4px);
}
.view {
  display: flex;
  align-items: center;
  width: 62px;
  height: 19px;
  margin-left: 1px;
  padding-left: 2px;
  background: #fff;
  gap: 2px;
}
select {
  appearance: none;
  flex: 1;
  min-width: 0;
  height: 100%;
  opacity: 1;
}
.drop {
  display: flex;
  flex: none;
  align-items: center;
  justify-content: center;
  align-self: stretch;
  width: 11px;
  background: #f0ede2;
  pointer-events: none;
}
.drop .caret {
  margin: 0;
}
.body {
  display: flex;
  flex: 1;
}
.nav {
  flex: none;
  width: 147px;
  overflow: hidden;
}
.inner {
  display: flex;
  flex-direction: column;
  height: 100%;
  margin-left: -20px;
  padding-top: 1px;
}
.phead {
  display: flex;
  align-items: center;
  flex: none;
  height: 16px;
  border: 1px solid #85837a;
}
.phead span {
  flex: 1;
}
.phead button {
  display: flex;
  width: 16px;
  margin-right: 2px;
}
.nav .phead {
  padding-left: 3px;
}
.section {
  flex: none;
  height: 22px;
  margin-top: 1px;
  border-bottom: 1px solid #8d8a7c;
  border-right: 1px solid #8d8a7c;
  border-top: 1px solid #fff;
}
.section + .section {
  margin-top: 0;
  border-bottom-width: 2px;
}
.minibar {
  display: flex;
  align-items: center;
  flex: none;
  height: 27px;
  margin-top: 1px;
  padding-left: 15px;
  gap: 5px;
  background: linear-gradient(#fbfaf7, #e9e5d4);
}
.minibar b {
  width: 10px;
  font-size: 14px;
}
.minibar button {
  display: flex;
}
.tree {
  flex: 1;
  margin-right: 2px;
  border: 1px solid #7f9db9;
  background: #fff;
  white-space: nowrap;
}
.row {
  display: flex;
  align-items: center;
  height: 16px;
  gap: 4px;
}
.folder {
  padding-left: 27px;
}
.folder::before {
  content: '';
  width: 6px;
  margin: 0 -4px 0 -6px;
  border-top: 1px dotted #a9a695;
}
.tree ul {
  margin-left: 35px;
  border-left: 1px dotted #a9a695;
}
.tree ul .row::before {
  content: '';
  width: 9px;
  margin-right: -4px;
  border-top: 1px dotted #a9a695;
}
.row span {
  padding: 0 6px 0 1px;
}
.row .sel {
  background: #ece9d8;
}
.parts {
  display: flex;
  flex: none;
  flex-direction: column;
  width: 226px;
  margin: 1px 3px 0 4px;
}
.pbar {
  margin-top: 1px;
  padding-left: 1px;
  background: linear-gradient(#fbfaf7, #e9e5d4);
}
.find {
  display: flex;
  height: 25px;
  margin: 2px 0 1px;
}
.find input {
  flex: 1;
  min-width: 0;
  padding: 0 2px 4px;
  border: 1px solid #7f9db9;
  background: #fff;
}
.find input::placeholder {
  color: #808080;
  opacity: 1;
}
.find button {
  display: flex;
  align-items: center;
  justify-content: center;
  width: 26px;
  background: #f5f3ec;
}
.ptree {
  flex: 1;
  border: 1px solid #7f9db9;
  background: #fff;
}
.prow {
  display: flex;
  align-items: center;
  height: 16px;
  padding-left: 8px;
  gap: 4px;
}
.kid {
  padding-left: 42px;
}
.kid::before {
  content: '';
  align-self: flex-start;
  width: 10px;
  height: 9px;
  margin: 0 -4px 0 -11px;
  border: dotted #a9a695;
  border-width: 0 0 1px 1px;
}
.kid .ic {
  width: 14px;
  height: 14px;
}
.kid span {
  padding: 0 4px 0 2px;
  background: #316ac5;
}
.minus {
  width: 9px;
  height: 9px;
  margin-right: 4px;
  border: 1px solid #7f9db9;
  background: linear-gradient(#222, #222) center / 5px 1px no-repeat, #fff;
}
.work {
  display: flex;
  flex: 1;
  flex-direction: column;
  min-width: 0;
}
.trow {
  display: flex;
  align-items: center;
  flex: none;
  height: 26px;
  padding-left: 1px;
  gap: 3px;
}
.blank {
  width: 31px;
}
.combo {
  display: flex;
  flex: none;
  align-items: center;
  width: 69px;
  height: 20px;
  margin: 0 0 0 3px;
  padding-left: 1px;
  background: #fff;
}
.combo.short {
  width: 58px;
  margin-left: 2px;
}
.combo + .sep {
  margin-left: 5px;
}
.plan {
  position: relative;
  flex: 1;
  overflow: hidden;
  background: #000;
}
.cad {
  position: absolute;
  inset: 0;
  width: 100%;
  height: 100%;
}
.cad text {
  dominant-baseline: central;
}
.mark {
  fill: #d8d8d8;
  font: 14px 'Liberation Mono', monospace;
}
.span {
  fill: #c8c8c8;
  font: 15px 'Liberation Sans', sans-serif;
}
.num {
  fill: #fff;
  font: 14px 'Liberation Mono', monospace;
}
.note {
  fill: #fff;
  font: 15px 'Noto Sans CJK SC', sans-serif;
}
.spec {
  fill: #0f0;
  font: 14px 'Liberation Mono', monospace;
}
.faint {
  fill: #606060;
  font: 10px 'Liberation Mono', monospace;
}
.small {
  fill: #c0c0c0;
  font: 12px 'Liberation Sans', sans-serif;
}
.big {
  fill: #0f0;
  font: bold 18px 'Liberation Serif', serif;
}

/* floating windows on the drawing area */
.win {
  position: absolute;
  display: flex;
  flex-direction: column;
}
.title {
  display: flex;
  align-items: center;
  flex: none;
  justify-content: space-between;
  font-weight: bold;
  font-size: 13px;
}
.dim {
  border: solid #7b8edb;
  border-width: 0 4px 4px 3px;
}
.dim .title {
  height: 22px;
  margin: 0 -4px 0 -3px;
  padding: 2px 6px 0 3px;
  color: #d6e2f8;
  background: linear-gradient(#6f8fdc, #9db5ee 2px, #7b98e0 4px, #7c9ce4 15px, #83a9ee 20px, #7790da);
}
.close {
  display: flex;
  align-items: center;
  justify-content: center;
  width: 13px;
  height: 13px;
  border: 1px solid #fff;
  border-radius: 2px;
  background: #c4626c;
}
.close svg {
  width: 9px;
  height: 9px;
  fill: none;
  stroke: #fff;
  stroke-width: 2;
}
.propwin {
  top: 140px;
  left: 121px;
  width: 331px;
  height: 330px;
  border-width: 0 5px;
}
.propwin .title {
  margin: 0 -5px;
}
.propwin .pane {
  flex: 1;
  padding: 1px 0 0 1px;
  background: #fff;
}
table {
  width: 100%;
  border-collapse: collapse;
  table-layout: fixed;
}
.c1 {
  width: 21px;
}
.c2 {
  width: 121px;
}
.c4 {
  width: 31px;
}
tr {
  height: 19px;
}
th,
td {
  padding: 0;
  border: 1px solid #c0c0c0;
  font-weight: normal;
  line-height: 16px;
  white-space: nowrap;
}
thead tr {
  height: 23px;
}
th {
  background: linear-gradient(#fbfaf7, #ebe8da);
}
thead .hot {
  color: #800040;
  background: linear-gradient(#fbd795, #f2bf62);
}
.pname {
  padding-left: 19px;
}
.pname.fold {
  padding-left: 2px;
}
.blue {
  color: #00f;
}
.pval.blue {
  color: #000;
}
.gray,
.fold {
  color: #808080;
}
.pval {
  padding-left: 2px;
}
.plus {
  display: inline-flex;
  align-items: center;
  justify-content: center;
  width: 12px;
  height: 12px;
  margin-right: 5px;
  border: 1px solid #aaa;
  color: #000;
  line-height: 10px;
  vertical-align: -1px;
}
.cur th {
  color: #800040;
  background: #fdce86;
}
.cur .pname {
  color: #fff;
  background: #316ac5;
}
.cur .pval {
  background: #dfe8f6;
}
.bar {
  width: 9px;
  height: 10px;
  margin: 0 1px 0 2px;
  fill: none;
  stroke: #000;
  stroke-width: 1.3;
  vertical-align: -2px;
}
.pbox input {
  display: block;
  appearance: none;
  width: 13px;
  height: 13px;
  margin: 0 auto;
  border: 1px solid #1c5180;
  background: linear-gradient(135deg, #dcdcd7, #fff);
}
.secwin {
  top: 113px;
  left: 529px;
  right: 19px;
}
.secwin .pane {
  background: #ece9d8;
}
.tabs {
  display: flex;
  align-items: flex-end;
  height: 21px;
  padding-left: 2px;
  margin-bottom: -1px;
}
.tabs button {
  width: 47px;
  height: 18px;
  padding-right: 12px;
  border: 1px solid #91a7b4;
  border-bottom: 0;
  border-radius: 3px 3px 0 0;
  background: linear-gradient(#fff, #ece9d8);
}
.tabs .act {
  position: relative;
  width: 51px;
  height: 21px;
  padding: 0 12px 2px 0;
  border-top: 3px solid #ffc73c;
  background: #fbfaf7;
}
.sheet {
  padding: 2px 4px 0 5px;
  border-top: 1px solid #919b9c;
  background: linear-gradient(#fff, #fff) 0 0 / 100% 2px no-repeat, #ece9d8;
}
.info {
  width: max-content;
  padding-right: 4px;
}
.wide {
  width: 100%;
}
.info label {
  padding-left: 6px;
}
.framed {
  width: 135px;
  margin-left: 2px;
  border: 1px solid #316ac5;
}
.draw {
  position: relative;
  height: 477px;
  border: 3px solid #f00;
  background: #000;
}
.float {
  position: absolute;
  top: 1px;
  left: 152px;
  border: 2px solid #8d8a7c;
  outline: 1px solid #ece9d8;
  outline-offset: -3px;
}
.ftitle {
  height: 19px;
  padding-left: 3px;
  color: #fff;
  background: #aca899;
  font-weight: bold;
  font-size: 13px;
  line-height: 18px;
}
.fbar {
  width: 200px;
  height: 22px;
  gap: 1px;
}
.fbar .caret {
  margin-left: 6px;
}
.combo.dead {
  flex: 1;
  margin: 0 1px 0 0;
  border: 1px solid #aca899;
  color: #aca899;
  background: #f3f1e8;
}
.dead .drop {
  background: none;
}
.dead .caret {
  margin: 0;
}
.status {
  display: flex;
  align-items: flex-end;
  justify-content: space-between;
  height: 20px;
  margin-top: 6px;
  padding: 0 4px 2px 176px;
  border-top: 1px solid #d0cdbe;
  background: linear-gradient(#fbfaf7, #ece9d8);
}
.status svg {
  width: 10px;
  height: 10px;
}
.polywin {
  top: 467px;
  bottom: 0;
  left: 0;
  width: 709px;
  border-right: 4px solid #0842d8;
}
.polywin .title {
  height: 22px;
  margin-right: -4px;
  padding: 2px 5px 0 0;
  color: #fff;
  background: linear-gradient(#0a5ae0, #3a8cf8 2px, #0562ec 5px, #0560ee 14px, #0a6cfc 19px, #0448c8);
}
.polywin .title span {
  margin-left: -8px;
}
.polywin .close {
  background: #e0522c;
}
.polywin .pane {
  display: flex;
  flex: 1;
  flex-direction: column;
  overflow: hidden;
}
.polybar,
.coord {
  border-radius: 0;
}
.polybar {
  height: 27px;
  margin-left: -8px;
  background: linear-gradient(#fbfaf7, #ece9d8);
}
.coord {
  height: 24px;
  background: linear-gradient(#fbfaf7, #efecdf);
}
.modes {
  display: flex;
  align-items: center;
  height: 100%;
  width: 147px;
  gap: 12px;
  background: #ece9d8;
}
.m0 {
  flex: none;
  margin-left: -6px;
}
.modes label {
  display: flex;
  flex: none;
  align-items: center;
  gap: 8px;
}
.modes input {
  appearance: none;
  width: 11px;
  height: 11px;
  border: 1px solid #b5b2a2;
  border-radius: 50%;
}
.coord .sep {
  margin-right: 1px;
}
.axis {
  width: 27px;
}
.spin {
  display: flex;
  align-items: center;
  width: 78px;
  height: 19px;
  padding-right: 5px;
  border: 1px solid #aca899;
  background: #f3f1e8;
}
.spin input {
  flex: 1;
  min-width: 0;
  margin-right: 12px;
  text-align: right;
  color: #aca899;
}
.spin svg {
  width: 5px;
  height: 14px;
}
.unit {
  width: 33px;
  padding-left: 7px;
  font: 10px/16px 'Liberation Sans', sans-serif;
}
.polydraw {
  position: relative;
  flex: 1;
  background: #000;
}
.ink {
  position: absolute;
  inset: 0;
  width: 100%;
  height: 100%;
  pointer-events: none;
}
</style>
